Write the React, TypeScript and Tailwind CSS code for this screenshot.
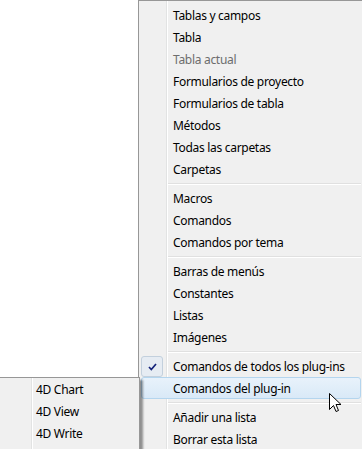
import React from "react";

type Item = { label: string; disabled?: boolean; checked?: boolean; hot?: boolean } | "sep";

const items: Item[] = [
  { label: "Tablas y campos" },
  { label: "Tabla" },
  { label: "Tabla actual", disabled: true },
  { label: "Formularios de proyecto" },
  { label: "Formularios de tabla" },
  { label: "Métodos" },
  { label: "Todas las carpetas" },
  { label: "Carpetas" },
  "sep",
  { label: "Macros" },
  { label: "Comandos" },
  { label: "Comandos por tema" },
  "sep",
  { label: "Barras de menús" },
  { label: "Constantes" },
  { label: "Listas" },
  { label: "Imágenes" },
  "sep",
  { label: "Comandos de todos los plug-ins", checked: true },
  { label: "Comandos del plug-in", hot: true },
  "sep",
  { label: "Añadir una lista" },
  { label: "Borrar esta lista" },
];

const font = { fontFamily: '"Noto Sans", "Open Sans", sans-serif' };

function Check() {
  return (
    <div className="absolute left-0 top-[1px] w-[22px] h-[21px] rounded-[3px] border border-[#c3d0dd] bg-[#e6ecf3] flex items-center justify-center">
      <svg width="9" height="8" viewBox="0 0 9 8">
        <path d="M1 4 L3.3 6.5 L8 1" fill="none" stroke="#14237a" strokeWidth="1.7" />
      </svg>
    </div>
  );
}

export default function App() {
  return (
    <div
      className="relative w-[362px] h-[449px] bg-white overflow-hidden text-[12px] tracking-[-0.3px] text-black"
      style={font}
    >
      {/* main menu */}
      <div className="absolute left-[138px] top-0 w-[226px] h-[470px] border border-[#979797] bg-[#f0f0f0] px-[2px] pt-[3px] flex flex-col">
        <div className="absolute left-[27px] top-0 bottom-0 w-[1px] bg-[#e2e3e3]" />
        <div className="absolute left-[28px] top-0 bottom-0 w-[1px] bg-white" />
        {items.map((it, i) =>
          it === "sep" ? (
            <div key={i} className="relative h-[7px] pl-[27px] pt-[3px]">
              <div className="h-[1px] bg-[#e0e0e0]" />
              <div className="h-[1px] bg-white" />
            </div>
          ) : it.hot ? (
            <div
              key={i}
              className="relative h-[22px] flex items-center pl-[31px] pt-[1px] rounded-[3px] border border-[#b4d5ee] bg-gradient-to-b from-[#e8f2fb] to-[#d9e9f7]"
            >
              <span className="leading-none">{it.label}</span>
            </div>
          ) : (
            <div key={i} className="relative h-[22px] flex items-center pl-[32px] pt-[1px]">
              {it.checked && <Check />}
              <span className={`leading-none ${it.disabled ? "text-[#6d6d6d]" : ""}`}>{it.label}</span>
            </div>
          )
        )}
      </div>

      {/* sub menu */}
      <div className="absolute left-[-1px] top-[377px] w-[141px] h-[90px] border border-[#979797] bg-[#f0f0f0] shadow-[3px_3px_2px_rgba(0,0,0,0.4)] flex flex-col">
        <div className="absolute left-[31px] top-0 bottom-0 w-[1px] bg-[#e2e3e3]" />
        <div className="absolute left-[32px] top-0 bottom-0 w-[1px] bg-white" />
        {["4D Chart", "4D View", "4D Write"].map((l) => (
          <div key={l} className="relative h-[22px] flex items-center pl-[36px] pt-[1px]">
            <span className="leading-none">{l}</span>
          </div>
        ))}
      </div>

      {/* cursor */}
      <svg className="absolute left-[329px] top-[393px]" width="13" height="20" viewBox="0 0 13 20">
        <path
          d="M0.5 0.5 L0.5 16.5 L4.5 12.5 L7 18.5 L9.5 17.5 L7 11.5 L12 11.5 Z"
          fill="white"
          stroke="black"
          strokeWidth="1"
          strokeLinejoin="miter"
        />
      </svg>
    </div>
  );
}
